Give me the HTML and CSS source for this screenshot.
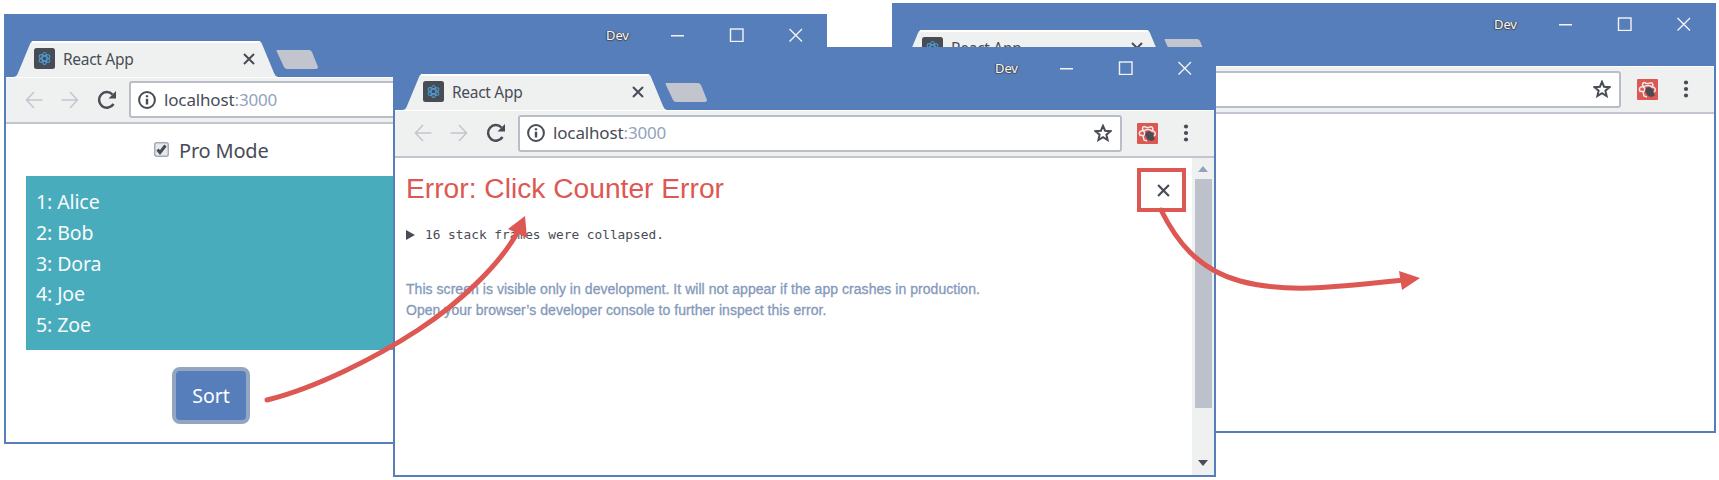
FILE: index.html
```html
<!DOCTYPE html>
<html lang="en">
<head>
<meta charset="utf-8">
<title>React App</title>
<link rel="stylesheet" href="styles.css">
</head>
<body>
<svg class="defs" width="0" height="0">
  <symbol id="tabshape" viewBox="0 0 304 36"><path d="M0 36C3 35 3 34 4 32L16 3Q17 0 20 0H244Q247 0 248 3L260 32Q261 35 264 36Z" fill="#eff1f1"/><path d="M18 1H246" stroke="#fff" stroke-width="2"/><path d="M262.500 9H295Q297 9 298 11L304 26Q304 28 302 28H273Q271 28 270 26L263 11Z" fill="#c2c5ce"/></symbol>
  <symbol id="react" viewBox="0 0 21 21"><rect width="21" height="21" rx="2.500" fill="#484c55"/><g fill="none" stroke="#4d9ad0" stroke-width="1.100"><ellipse cx="10.500" cy="10.500" rx="2.400" ry="6"/><ellipse cx="10.500" cy="10.500" rx="2.400" ry="6" transform="rotate(60 10.500 10.500)"/><ellipse cx="10.500" cy="10.500" rx="2.400" ry="6" transform="rotate(120 10.500 10.500)"/></g></symbol>
  <symbol id="x" viewBox="0 0 12 12"><path d="M1 1L11 11M11 1L1 11" fill="none" stroke="currentColor" stroke-width="2"/></symbol>
  <symbol id="controls" viewBox="0 0 132 14"><g fill="none" stroke="#f4f4f2" stroke-width="1.400"><path d="M0 7.700H13M118.500 1L131 13.500M131 1L118.500 13.500"/><rect x="59.500" y="1" width="12.500" height="12.500"/></g></symbol>
  <symbol id="back" viewBox="0 0 18 18"><path d="M17.500 9H1.500M9 1L1.500 9L9 17" fill="none" stroke="#c2c5cd" stroke-width="1.500"/></symbol>
  <symbol id="reload" viewBox="0 0 20 20"><path d="M16.500 14A7.800 7.800 0 1 1 15.500 4.500" fill="none" stroke="#484c55" stroke-width="2.500"/><path d="M19 1V8.500H11.500Z" fill="#484c55"/></symbol>
  <symbol id="info" viewBox="0 0 18 18"><circle cx="9" cy="9" r="7.900" fill="none" stroke="#484c55" stroke-width="2"/><path d="M9 7.800V13.500M9 4.300V6.300" stroke="#484c55" stroke-width="2.400"/></symbol>
  <symbol id="star" viewBox="0 0 18 18"><path d="M9 1.800L11.100 6.700L16.400 7.200L12.400 10.700L13.600 16L9 13.200L4.400 16L5.600 10.700L1.600 7.200L6.900 6.700Z" fill="none" stroke="#484c55" stroke-width="2"/></symbol>
  <symbol id="ext" viewBox="0 0 21 21"><rect width="21" height="21" rx="1" fill="#dd5853"/><g fill="none" stroke="#eceaea" stroke-width="1.500"><path d="M3.500 13C1 10 3 7 6.500 8C9 6 13 6 15 8C18.500 8 19.500 11 17 13M6.500 8C4 4 7 2.500 9 4.500H12C15 2.500 17 5 15 8M6 8C9 9 8 12 6 13L7 17L10 18M3 12L7 13"/></g><path d="M9 9L12 8L17 11L16 13L18 16L15 18L11 17L8 12Z" fill="#484c55"/></symbol>
  <symbol id="dots" viewBox="0 0 6 18"><g fill="#484c55"><circle cx="3" cy="2.500" r="2.100"/><circle cx="3" cy="9" r="2.100"/><circle cx="3" cy="15.500" r="2.100"/></g></symbol>
</svg>
<main class="stage">

  <section class="window window-left">
    <header class="titlebar">
      <div class="tab"><svg class="tab-shape"><use href="#tabshape"/></svg><svg class="favicon"><use href="#react"/></svg><span class="tab-title">React App</span><svg class="tab-close"><use href="#x"/></svg></div>
      <div class="caption"><span class="dev">Dev</span><svg class="controls"><use href="#controls"/></svg></div>
    </header>
    <nav class="toolbar">
      <svg class="arrow"><use href="#back"/></svg><svg class="arrow forward"><use href="#back"/></svg><svg class="reload"><use href="#reload"/></svg>
      <div class="address"><svg class="info"><use href="#info"/></svg><span class="url">localhost<span class="port">:3000</span></span><svg class="star"><use href="#star"/></svg></div>
      <svg class="ext"><use href="#ext"/></svg><svg class="dots"><use href="#dots"/></svg>
    </nav>
    <div class="page app">
      <div class="mode"><svg class="check" viewBox="0 0 15 15"><rect x=".75" y=".75" width="13.500" height="13.500" rx="2" fill="#e6e9ee" stroke="#a3abb9" stroke-width="1.500"/><path d="M3.500 7.500L6 10.500L11.500 3.500" fill="none" stroke="#484c55" stroke-width="3"/></svg><span>Pro Mode</span></div>
      <ul class="names"><li>1: Alice</li><li>2: Bob</li><li>3: Dora</li><li>4: Joe</li><li>5: Zoe</li></ul>
      <button class="sort">Sort</button>
    </div>
  </section>

  <section class="window window-right">
    <header class="titlebar">
      <div class="tab"><svg class="tab-shape"><use href="#tabshape"/></svg><svg class="favicon"><use href="#react"/></svg><span class="tab-title">React App</span><svg class="tab-close"><use href="#x"/></svg></div>
      <div class="caption"><span class="dev">Dev</span><svg class="controls"><use href="#controls"/></svg></div>
    </header>
    <nav class="toolbar">
      <svg class="arrow"><use href="#back"/></svg><svg class="arrow forward"><use href="#back"/></svg><svg class="reload"><use href="#reload"/></svg>
      <div class="address"><svg class="star"><use href="#star"/></svg></div>
      <svg class="ext"><use href="#ext"/></svg><svg class="dots"><use href="#dots"/></svg>
    </nav>
    <div class="page"></div>
  </section>

  <section class="window window-front">
    <header class="titlebar">
      <div class="tab"><svg class="tab-shape"><use href="#tabshape"/></svg><svg class="favicon"><use href="#react"/></svg><span class="tab-title">React App</span><svg class="tab-close"><use href="#x"/></svg></div>
      <div class="caption"><span class="dev">Dev</span><svg class="controls"><use href="#controls"/></svg></div>
    </header>
    <nav class="toolbar">
      <svg class="arrow"><use href="#back"/></svg><svg class="arrow forward"><use href="#back"/></svg><svg class="reload"><use href="#reload"/></svg>
      <div class="address"><svg class="info"><use href="#info"/></svg><span class="url">localhost<span class="port">:3000</span></span><svg class="star"><use href="#star"/></svg></div>
      <svg class="ext"><use href="#ext"/></svg><svg class="dots"><use href="#dots"/></svg>
    </nav>
    <div class="page overlay">
      <div class="report">
        <h1 class="error">Error: Click Counter Error</h1>
        <div class="frames"><svg class="expand" viewBox="0 0 9 10"><path d="M0 0L9 5L0 10Z" fill="#484c55"/></svg><span>16 stack frames were collapsed.</span></div>
        <p class="note">This screen is visible only in development. It will not appear if the app crashes in production.<br>Open your browser’s developer console to further inspect this error.</p>
      </div>
      <div class="dismiss"><svg class="dismiss-x"><use href="#x"/></svg></div>
      <div class="scrollbar"><svg class="up" viewBox="0 0 10 6"><path d="M0 6L5 0L10 6Z" fill="#93a3bd"/></svg><div class="thumb"></div><svg class="down" viewBox="0 0 10 6"><path d="M0 0H10L5 6Z" fill="#484c55"/></svg></div>
    </div>
  </section>

  <svg class="annotations" viewBox="0 0 1719 480">
    <g fill="none" stroke="#dd5853" stroke-width="5" stroke-linecap="round">
      <path d="M267 400C316 388 375 358 418 330S500 264 517 233"/>
      <path d="M1161 210C1175 238 1196 269 1240 281S1330 288 1400 280.500"/>
    </g>
    <path d="M525 216L508 229L527 238ZM1420 278L1399 271L1402 290Z" fill="#dd5853"/>
  </svg>
</main>
</body>
</html>
```
FILE: styles.css
```css
* { box-sizing: border-box; }
body { margin: 0; background: #fff; overflow: hidden; font-family: "Noto Sans", "Open Sans", sans-serif; color: #484c55; }
.defs { position: absolute; }
svg { display: block; flex: none; }
.stage { position: relative; width: 1719px; height: 480px; overflow: hidden; }
.window { position: absolute; width: 823px; height: 430px; display: flex; flex-direction: column; background: #fff; border: 2px solid #567ebb; border-top: 0; }
.window-left { left: 4px; top: 14px; }
.window-right { left: 892px; top: 3px; width: 824px; }
.window-front { left: 393px; top: 47px; }
.titlebar { height: 63px; flex: none; background: #567ebb; display: flex; justify-content: space-between; align-items: flex-start; }
.tab { width: 304px; height: 36px; margin: 27px 0 0 8px; display: grid; grid-template-columns: 20px 21px 8px 180px 12px; align-items: center; }
.tab > * { grid-row: 1; }
.tab-shape { grid-column: 1 / -1; width: 304px; height: 36px; }
.favicon { grid-column: 2; width: 21px; height: 21px; margin-bottom: 1px; }
.tab-title { grid-column: 4; font-size: 15.500px; line-height: 20px; letter-spacing: -.3px; margin-bottom: 1px; white-space: nowrap; }
.tab-close { grid-column: 5; width: 12px; height: 12px; margin-bottom: 1px; }
.caption { display: flex; padding: 12px 22px 0 0; align-items: center; }
.window-right .caption { padding-right: 23px; }
.dev { width: 65px; font-size: 13px; line-height: 18px; letter-spacing: -.1px; color: #f7f7f5; text-shadow: 0 1px 1px #484c55, 1px 0 1px #484c55, -1px 0 1px #484c55; }
.controls { width: 132px; height: 14px; }
.toolbar { height: 48px; flex: none; background: #eff1f1; border-top: 1px solid #fff; border-bottom: 2px solid #c2c5cd; display: flex; align-items: center; padding: 0 0 1px 19px; }
.window-left .toolbar { height: 47px; }
.arrow { width: 18px; height: 18px; margin-right: 18px; }
.forward { transform: scaleX(-1); }
.reload { width: 20px; height: 20px; margin-right: 11px; }
.address { width: 604px; height: 37px; margin-left: 1px; border: 2px solid #b8bdc8; border-radius: 3px; background: #fff; display: flex; align-items: center; padding: 0 8px 0 7px; }
.info { width: 18px; height: 18px; margin-right: 8px; }
.url { font-size: 17px; line-height: 24px; letter-spacing: -.15px; }
.port { color: #93a3bd; }
.star { width: 18px; height: 18px; margin-left: auto; }
.ext { width: 21px; height: 21px; margin: 0 25px 0 15px; }
.window-right .ext { margin-left: 16px; }
.dots { width: 6px; height: 18px; }
.page { flex: 1; display: flex; }
.app { flex-direction: column; align-items: flex-start; }
.mode { display: flex; align-items: center; height: 27px; margin: 13px 0 12px 148px; font-size: 20px; line-height: 27px; letter-spacing: -.2px; }
.check { width: 15px; height: 15px; margin: 0 10px 3px 0; }
.names { list-style: none; margin: 0 0 17px 20px; width: 780px; height: 174px; background: #48acbd; color: #fafafa; padding: 11px 10px; font-size: 19.500px; line-height: 30.800px; letter-spacing: -.1px; }
.sort { width: 78px; height: 57px; padding: 0; margin-left: 166px; border: 4px solid #93a5c0; border-radius: 8px; background: #567ebb; color: #fff; font: 19.500px "Noto Sans", sans-serif; }
.overlay { justify-content: flex-end; }
.report { flex: 1; padding: 15px 0 0 11px; }
.error { margin: 0; font: 28.200px/31px "Liberation Sans", Arial, sans-serif; color: #dd5853; white-space: nowrap; }
.frames { display: flex; align-items: center; height: 18px; margin-top: 22px; font: 12.800px/18px "DejaVu Sans Mono", monospace; white-space: nowrap; }
.expand { width: 9px; height: 10px; margin-right: 10px; }
.note { margin: 35px 0 0; font: 14px/20.500px "Liberation Sans", Arial, sans-serif; letter-spacing: .045px; color: #8499bb; -webkit-text-stroke: .3px #8499bb; white-space: nowrap; }
.dismiss { width: 49px; height: 44px; margin: 10px 6px 0 0; border: 4px solid #dd5853; display: flex; align-items: center; justify-content: center; padding-left: 3px; }
.dismiss-x { width: 13px; height: 13px; }
.scrollbar { width: 22px; background: #eff1f1; display: flex; flex-direction: column; align-items: center; }
.up { width: 10px; height: 6px; margin: 8px 0 7px; }
.thumb { width: 17px; height: 229px; background: #bcc1cc; }
.down { width: 10px; height: 6px; margin: auto 0 9px; }
.annotations { position: absolute; left: 0; top: 0; width: 1719px; height: 480px; }
```
